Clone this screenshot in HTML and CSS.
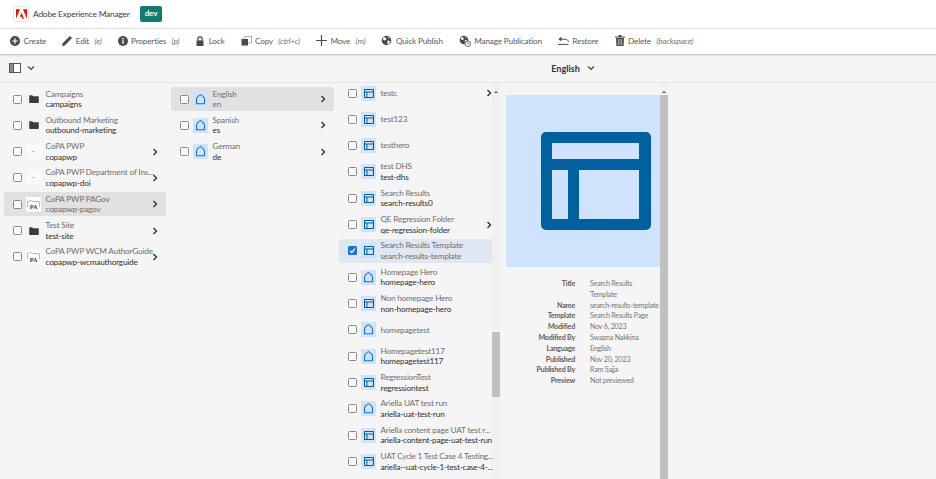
FILE: index.html
```html
<!DOCTYPE html>
<html lang="en">
<head>
    <meta charset="UTF-8">
    <title>Adobe Experience Manager</title>
    <link rel="stylesheet" href="styles.css">
</head>
<body>
    <svg class="defs" width="0" height="0">
        <symbol id="i-folder" viewBox="0 0 12 10"><path d="M0 1.200C0 .7.4.4.8.4h3l1 1.200h6.300c.5 0 .9.4.9.9v6.600c0 .5-.4.9-.9.9H.8c-.4 0-.8-.4-.8-.9z" fill="#3c3c3c"/></symbol>
        <symbol id="i-home" viewBox="0 0 15 15"><path d="M3.500 11.800V7.200C3.500 5.400 5.500 3.800 7.500 2.600c2 1.200 4 2.800 4 4.600v4.600z" fill="none" stroke="#1473c4" stroke-width="1.100" stroke-linejoin="round"/></symbol>
        <symbol id="i-page" viewBox="0 0 110 98"><path fill-rule="evenodd" d="M5 0h100a5 5 0 0 1 5 5v88a5 5 0 0 1-5 5H5a5 5 0 0 1-5-5V5a5 5 0 0 1 5-5zM11 11v16h87V11zM11 38v49h16V38zM38 38v49h60V38z" fill="#0060a0"/></symbol>
        <symbol id="i-chev" viewBox="0 0 8 8"><path d="M2.500 1l3 3-3 3" fill="none" stroke="#333" stroke-width="1.400"/></symbol>
        <symbol id="i-down" viewBox="0 0 8 8"><path d="M1 2.500l3 3 3-3" fill="none" stroke="#444" stroke-width="1.200"/></symbol>
        <symbol id="i-globe" viewBox="0 0 12 12"><circle cx="6" cy="6" r="5.200" fill="#4b4b4b"/><path d="M3 2l2 1 1 2-2 1-2-1zM7 6l3 .5-1 3-2 1zM7 1.500l2 1-1 1z" fill="#f4f4f4"/></symbol>
        <symbol id="i-pa" viewBox="0 0 15 15"><path d="M1.500 10V4.500h1.400l.7-.9h2l.6.9h7.300V10" fill="none" stroke="#f2a93b" stroke-width=".9"/></symbol>
    </svg>

    <header class="top-bar">
        <span class="logo-tile">
            <svg width="11" height="10" viewBox="0 0 30 26"><path d="M11 0H0v26zM19 0h11v26zM15 9.600L22 26h-4.600l-2-5.200h-5.100z" fill="#eb1000"/></svg>
        </span>
        <span class="product">Adobe Experience Manager</span>
        <span class="env-badge">dev</span>
    </header>

    <nav class="action-bar">
        <button class="action"><svg width="10" height="10" viewBox="0 0 10 10"><circle cx="5" cy="5" r="5" fill="#4b4b4b"/><path d="M5 2.200v5.600M2.200 5h5.600" stroke="#fff" stroke-width="1.200"/></svg>Create</button>
        <button class="action"><svg width="10" height="10" viewBox="0 0 10 10"><path d="M0 10l.6-2.800L7.400.4a.8.8 0 0 1 1.100 0l1.100 1.100a.8.8 0 0 1 0 1.100L2.800 9.400z" fill="#4b4b4b"/></svg>Edit <em>(e)</em></button>
        <button class="action"><svg width="10" height="10" viewBox="0 0 10 10"><circle cx="5" cy="5" r="5" fill="#4b4b4b"/><path d="M5 4.200v3.600" stroke="#fff" stroke-width="1.400"/><circle cx="5" cy="2.600" r=".9" fill="#fff"/></svg>Properties <em>(p)</em></button>
        <button class="action"><svg width="10" height="10" viewBox="0 0 10 10"><path d="M2.800 4.500V3a2.200 2.200 0 0 1 4.400 0v1.500" fill="none" stroke="#4b4b4b" stroke-width="1.200"/><rect x="1.500" y="4.300" width="7" height="5.700" rx=".6" fill="#4b4b4b"/></svg>Lock</button>
        <button class="action"><svg width="11" height="10" viewBox="0 0 11 10"><rect x="4" y=".5" width="6.500" height="6.500" fill="none" stroke="#9a9a9a" stroke-width=".8"/><rect x=".5" y="3" width="6.500" height="6.500" fill="#4b4b4b"/></svg>Copy <em>(ctrl+c)</em></button>
        <button class="action"><svg width="11" height="11" viewBox="0 0 11 11"><path d="M5.500 0v11M0 5.500h11" stroke="#4b4b4b" stroke-width="1.200"/></svg>Move <em>(m)</em></button>
        <button class="action"><svg width="11" height="11"><use href="#i-globe"/></svg>Quick Publish</button>
        <button class="action"><svg width="12" height="12" viewBox="0 0 12 12"><use href="#i-globe" width="10" height="10"/><circle cx="8.800" cy="8.800" r="2.800" fill="#f4f4f4" stroke="#4b4b4b" stroke-width=".8"/><path d="M8.800 7.400v1.500h1.100" fill="none" stroke="#4b4b4b" stroke-width=".6"/></svg>Manage Publication</button>
        <button class="action"><svg width="11" height="9" viewBox="0 0 11 9"><path d="M0 8.400h10.500M2.500 3.200h4.300c2 0 3.400 1 3.700 2.800" fill="none" stroke="#4b4b4b"/><path d="M3.400 .6v5L.4 3.200z" fill="#4b4b4b"/></svg>Restore</button>
        <button class="action"><svg width="10" height="11" viewBox="0 0 10 11"><path d="M0 1.500h10v1H0zM3.500 0h3v1.500h-3zM1 3h8l-.4 8H1.400z" fill="#4b4b4b"/><path d="M3.400 4v6M5 4v6M6.600 4v6" stroke="#fff" stroke-width=".5"/></svg>Delete <em>(backspace)</em></button>
    </nav>

    <div class="title-bar">
        <div class="rail-toggle">
            <svg width="12" height="10" viewBox="0 0 12 10"><rect x=".5" y=".5" width="11" height="9" fill="#fff" stroke="#555"/><rect x=".5" y=".5" width="4" height="9" fill="#8a8a8a" stroke="#555"/></svg>
            <svg width="8" height="8"><use href="#i-down"/></svg>
        </div>
        <div class="page-title">English<svg width="8" height="8"><use href="#i-down"/></svg></div>
    </div>

    <main class="browser">
        <section class="column column-first">
            <div class="row"><i class="check"></i><span class="tile plain"><svg width="10" height="8"><use href="#i-folder"/></svg></span><div class="names"><b>Campaigns</b><span>campaigns</span></div></div>
            <div class="row"><i class="check"></i><span class="tile plain"><svg width="10" height="8"><use href="#i-folder"/></svg></span><div class="names"><b>Outbound Marketing</b><span>outbound-marketing</span></div></div>
            <div class="row"><i class="check"></i><span class="tile blank"></span><div class="names"><b>CoPA PWP</b><span>copapwp</span></div><svg class="chev" width="8" height="8"><use href="#i-chev"/></svg></div>
            <div class="row"><i class="check"></i><span class="tile blank"></span><div class="names"><b>CoPA PWP Department of Ins...</b><span>copapwp-doi</span></div><svg class="chev" width="8" height="8"><use href="#i-chev"/></svg></div>
            <div class="row active"><i class="check"></i><span class="tile pa"><svg width="15" height="15"><use href="#i-pa"/></svg><u>PA</u></span><div class="names"><b>CoPA PWP PAGov</b><span>copapwp-pagov</span></div><svg class="chev" width="8" height="8"><use href="#i-chev"/></svg></div>
            <div class="row"><i class="check"></i><span class="tile plain"><svg width="10" height="8"><use href="#i-folder"/></svg></span><div class="names"><b>Test Site</b><span>test-site</span></div><svg class="chev" width="8" height="8"><use href="#i-chev"/></svg></div>
            <div class="row"><i class="check"></i><span class="tile pa"><svg width="15" height="15"><use href="#i-pa"/></svg><u>PA</u></span><div class="names"><b>CoPA PWP WCM AuthorGuide</b><span>copapwp-wcmauthorguide</span></div><svg class="chev" width="8" height="8"><use href="#i-chev"/></svg></div>
        </section>

        <section class="column column-second">
            <div class="row active"><i class="check"></i><span class="tile blue"><svg width="15" height="15"><use href="#i-home"/></svg></span><div class="names"><b>English</b><span>en</span></div><svg class="chev" width="8" height="8"><use href="#i-chev"/></svg></div>
            <div class="row"><i class="check"></i><span class="tile blue"><svg width="15" height="15"><use href="#i-home"/></svg></span><div class="names"><b>Spanish</b><span>es</span></div><svg class="chev" width="8" height="8"><use href="#i-chev"/></svg></div>
            <div class="row"><i class="check"></i><span class="tile blue"><svg width="15" height="15"><use href="#i-home"/></svg></span><div class="names"><b>German</b><span>de</span></div><svg class="chev" width="8" height="8"><use href="#i-chev"/></svg></div>
        </section>

        <section class="column column-third">
            <div class="scroll-list">
                <div class="row"><i class="check"></i><span class="tile blue"><svg width="10" height="9"><use href="#i-page"/></svg></span><div class="names"><b>testc</b></div><svg class="chev" width="8" height="8"><use href="#i-chev"/></svg></div>
                <div class="row"><i class="check"></i><span class="tile blue"><svg width="10" height="9"><use href="#i-page"/></svg></span><div class="names"><b>test123</b></div></div>
                <div class="row"><i class="check"></i><span class="tile blue"><svg width="10" height="9"><use href="#i-page"/></svg></span><div class="names"><b>testhero</b></div></div>
                <div class="row"><i class="check"></i><span class="tile blue"><svg width="10" height="9"><use href="#i-page"/></svg></span><div class="names"><b>test DHS</b><span>test-dhs</span></div></div>
                <div class="row"><i class="check"></i><span class="tile blue"><svg width="10" height="9"><use href="#i-page"/></svg></span><div class="names"><b>Search Results</b><span>search-results0</span></div></div>
                <div class="row"><i class="check"></i><span class="tile blue"><svg width="10" height="9"><use href="#i-page"/></svg></span><div class="names"><b>QE Regression Folder</b><span>qe-regression-folder</span></div><svg class="chev" width="8" height="8"><use href="#i-chev"/></svg></div>
                <div class="row picked"><i class="check on"><svg width="7" height="7" viewBox="0 0 8 8"><path d="M1.200 4.200l2 2 3.600-4.400" fill="none" stroke="#fff" stroke-width="1.500"/></svg></i><span class="tile blue"><svg width="10" height="9"><use href="#i-page"/></svg></span><div class="names"><b>Search Results Template</b><span>search-results-template</span></div></div>
                <div class="row"><i class="check"></i><span class="tile blue"><svg width="15" height="15"><use href="#i-home"/></svg></span><div class="names"><b>Homepage Hero</b><span>homepage-hero</span></div></div>
                <div class="row"><i class="check"></i><span class="tile blue"><svg width="10" height="9"><use href="#i-page"/></svg></span><div class="names"><b>Non homepage Hero</b><span>non-homepage-hero</span></div></div>
                <div class="row"><i class="check"></i><span class="tile blue"><svg width="15" height="15"><use href="#i-home"/></svg></span><div class="names"><b>homepagetest</b></div></div>
                <div class="row"><i class="check"></i><span class="tile blue"><svg width="15" height="15"><use href="#i-home"/></svg></span><div class="names"><b>Homepagetest117</b><span>homepagetest117</span></div></div>
                <div class="row"><i class="check"></i><span class="tile blue"><svg width="10" height="9"><use href="#i-page"/></svg></span><div class="names"><b>RegressionTest</b><span>regressiontest</span></div></div>
                <div class="row"><i class="check"></i><span class="tile blue"><svg width="15" height="15"><use href="#i-home"/></svg></span><div class="names"><b>Ariella UAT test run</b><span>ariella-uat-test-run</span></div></div>
                <div class="row"><i class="check"></i><span class="tile blue"><svg width="10" height="9"><use href="#i-page"/></svg></span><div class="names"><b>Ariella content page UAT test r...</b><span class="tight">ariella-content-page-uat-test-run</span></div></div>
                <div class="row"><i class="check"></i><span class="tile blue"><svg width="10" height="9"><use href="#i-page"/></svg></span><div class="names"><b class="tight">UAT Cycle 1 Test Case 4 Testing...</b><span class="tight">ariella--uat-cycle-1-test-case-4-...</span></div></div>
            </div>
            <div class="scrollbar list-scroll"><i class="arrow"></i><i class="thumb"></i></div>
        </section>

        <aside class="preview">
            <div class="preview-pane">
                <div class="thumb-box"><svg width="110" height="98"><use href="#i-page"/></svg></div>
                <dl class="meta">
                    <dt>Title</dt><dd>Search Results<br>Template</dd>
                    <dt>Name</dt><dd>search-results-template</dd>
                    <dt>Template</dt><dd>Search Results Page</dd>
                    <dt>Modified</dt><dd>Nov 6, 2023</dd>
                    <dt>Modified By</dt><dd>Swapna Nakkina</dd>
                    <dt>Language</dt><dd>English</dd>
                    <dt>Published</dt><dd>Nov 20, 2023</dd>
                    <dt>Published By</dt><dd>Ram Sajja</dd>
                    <dt>Preview</dt><dd>Not previewed</dd>
                </dl>
            </div>
            <div class="scrollbar preview-scroll"><i class="arrow"></i><i class="thumb"></i></div>
        </aside>
    </main>
</body>
</html>
```

FILE: styles.css
```css
* {
    box-sizing: border-box;
}
html, body {
    height: 100%;
}
body {
    margin: 0;
    width: 936px;
    height: 479px;
    overflow: hidden;
    display: flex;
    flex-direction: column;
    background: #f5f5f5;
    color: #4b4b4b;
    font-family: Lato, "Noto Sans", sans-serif;
    font-size: 8.2px;
    letter-spacing: -.18px;
}
.defs {
    position: absolute;
}

.top-bar {
    height: 29px;
    flex-shrink: 0;
    display: flex;
    align-items: center;
    padding-left: 13px;
    background: #fff;
    border-bottom: 1px solid #e3e3e3;
}
.logo-tile {
    width: 16px;
    height: 16px;
    display: flex;
    align-items: center;
    justify-content: center;
    border: 1px solid #e4e4e4;
    border-radius: 3px;
}
.product {
    margin-left: 4px;
    width: 107px;
    color: #3c3c3c;
    font-size: 8.4px;
    letter-spacing: -.2px;
    white-space: nowrap;
}
.env-badge {
    width: 22px;
    height: 16px;
    line-height: 15px;
    text-align: center;
    border-radius: 2px;
    background: #0f7b73;
    color: #fff;
    font-weight: 700;
}

.action-bar {
    height: 25px;
    flex-shrink: 0;
    display: flex;
    align-items: center;
    gap: 16px;
    padding: 0 0 2px 10px;
    background: #fff;
    box-shadow: 0 1px 2px rgba(0, 0, 0, .25);
    position: relative;
}
.action {
    display: flex;
    align-items: center;
    gap: 3.5px;
    padding: 0;
    border: none;
    background: none;
    color: #5a5a5a;
    font: inherit;
    letter-spacing: inherit;
    white-space: pre;
}
.action em {
    color: #777;
    letter-spacing: -.25px;
}

.title-bar {
    height: 29px;
    flex-shrink: 0;
    display: flex;
    align-items: center;
    border-bottom: 1px solid #e6e6e6;
}
.rail-toggle {
    width: 210px;
    display: flex;
    align-items: center;
    gap: 6px;
    padding-left: 9px;
}
.page-title {
    flex: 1;
    display: flex;
    align-items: center;
    justify-content: center;
    gap: 7px;
    color: #333;
    font-size: 9px;
    letter-spacing: 0;
    font-weight: 700;
}

.browser {
    flex: 1;
    min-height: 0;
    display: flex;
    align-items: flex-start;
    overflow: hidden;
}
.column {
    display: flex;
    flex-direction: column;
    gap: 2.33px;
    padding-top: 4px;
}
.column-first {
    width: 162px;
    margin-left: 4px;
}
.column-second {
    width: 163px;
    margin-left: 5px;
}
.column-third {
    width: 161px;
    height: 396px;
    margin-left: 5px;
    padding-top: 0;
    flex-direction: row;
    gap: 0;
}
.scroll-list {
    width: 153px;
    display: flex;
    flex-direction: column;
    gap: 2.33px;
    margin-top: -2px;
}

.row {
    height: 24px;
    flex-shrink: 0;
    display: flex;
    align-items: center;
    padding-left: 9px;
    border-radius: 3px;
    position: relative;
}
.row.active {
    background: #e1e1e1;
}
.row.picked {
    background: #dfe8f2;
    border-radius: 3px 0 0 3px;
}
.check {
    width: 9px;
    height: 9px;
    flex-shrink: 0;
    display: flex;
    align-items: center;
    justify-content: center;
    border: 1.3px solid #8a8a8a;
    border-radius: 1.5px;
    background: #fafafa;
}
.check.on {
    border: none;
    background: #1473e6;
}
.tile {
    width: 15px;
    height: 15px;
    flex-shrink: 0;
    display: flex;
    align-items: center;
    justify-content: center;
    margin-left: 4px;
}
.tile.blue {
    background: #cfe3fc;
}
.tile.blank {
    background: #f9f9f9;
}
.tile.blank::after {
    content: "";
    width: 3px;
    height: 1px;
    background: #ccc;
}
.tile.pa {
    display: grid;
    background: #fff;
}
.tile.pa svg, .tile.pa u {
    grid-area: 1 / 1;
}
.tile.pa u {
    padding-top: 6px;
    text-align: center;
    text-decoration: none;
    font: bold 6px/8px "Liberation Serif", serif;
    letter-spacing: 0;
    color: #1d3a6e;
}
.names {
    margin-left: 4.5px;
    min-width: 0;
    display: flex;
    flex-direction: column;
    line-height: 10.500px;
    white-space: nowrap;
}
.names b {
    font-weight: 400;
    color: #6e6e6e;
}
.names span {
    color: #2f2f2f;
}
.names .tight {
    letter-spacing: -.22px;
}
.row.active .names span, .row.picked .names span {
    color: #6e6e6e;
}
.chev {
    position: absolute;
    right: 7px;
    top: 8px;
}
.column-third .chev {
    right: -1px;
    top: 8px;
}

.scrollbar {
    width: 8px;
    display: flex;
    flex-direction: column;
    align-items: center;
    background: #f1f1f1;
}
.arrow {
    width: 0;
    height: 0;
    margin-top: 8px;
    border-left: 2px solid transparent;
    border-right: 2px solid transparent;
    border-bottom: 2.500px solid #555;
}
.thumb {
    width: 100%;
    background: #c1c1c1;
}
.list-scroll {
    height: 396px;
}
.list-scroll .thumb {
    height: 65px;
    margin-top: 239px;
}
.preview {
    margin-left: 6px;
    display: flex;
    height: 396px;
}
.preview-pane {
    width: 154px;
    padding-top: 12px;
}
.thumb-box {
    height: 172px;
    background: #cfe3fc;
    padding: 37px 0 0 35px;
}
.thumb-box svg {
    display: block;
}
.meta {
    margin: 12px 0 0;
    display: grid;
    grid-template-columns: 69px 1fr;
    column-gap: 15px;
    line-height: 10.800px;
    font-size: 7.2px;
    letter-spacing: -.24px;
}
.meta dt {
    text-align: right;
    font-weight: 700;
    color: #5e5e5e;
}
.meta dd {
    margin: 0;
    color: #777;
    white-space: nowrap;
}
.preview-scroll .arrow {
    margin-top: 8px;
}
.preview-scroll .thumb {
    flex: 1;
    margin-top: 2px;
}
```
